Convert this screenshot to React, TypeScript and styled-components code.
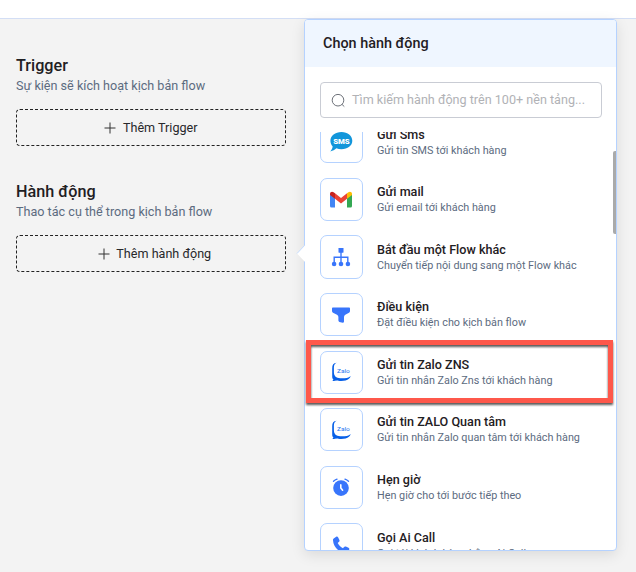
import React from "react";
import styled, { createGlobalStyle } from "styled-components";

const GlobalStyle = createGlobalStyle`
  * { box-sizing: border-box; }
  body { margin: 0; background: #f3f3f3; font-family: Roboto, "Open Sans", sans-serif; color: #1f2023; overflow: hidden; }
`;

const Page = styled.div`
  height: 572px;
  display: flex;
  flex-direction: column;
  overflow: hidden;
`;

const TopBar = styled.header`
  flex: none;
  height: 19px;
  background: #fff;
  border-bottom: 1px solid #d3def5;
`;

const Workspace = styled.main`
  display: flex;
  align-items: flex-start;
  gap: 18px;
  padding-left: 16px;
`;

const Steps = styled.div`
  width: 270px;
  padding-top: 35px;
  display: flex;
  flex-direction: column;
  gap: 34px;
`;

const Step = styled.section`
  height: 92px;
  display: flex;
  flex-direction: column;
`;

const StepTitle = styled.h2`
  margin: 0;
  height: 23px;
  font-size: 16.2px;
  line-height: 23px;
  font-weight: 500;
`;

const StepHint = styled.p`
  margin: 0;
  height: 18px;
  font-size: 12.6px;
  line-height: 18px;
  color: #5c6b80;
  white-space: nowrap;
`;

const AddButton = styled.button<{ $indent?: number }>`
  margin-top: 14px;
  padding: 0 0 0 ${({ $indent = 0 }) => $indent}px;
  flex: none;
  width: 270px;
  height: 37px;
  display: flex;
  align-items: center;
  justify-content: center;
  gap: 6.5px;
  border: 1px dashed #222;
  border-radius: 4px;
  background: transparent;
  color: #27282b;
  font: 400 12.6px/18px Roboto, sans-serif;
`;

const Panel = styled.aside`
  position: relative;
  width: 313px;
  height: 532px;
  display: flex;
  flex-direction: column;
  border: 1px solid #b5d2ff;
  border-radius: 4px;
  background: #fff;
  box-shadow: 0 4px 14px rgba(0, 0, 0, 0.1);
`;

const Pointer = styled.svg`
  position: absolute;
  left: -9px;
  top: 224px;
`;

const PanelHeader = styled.div`
  flex: none;
  height: 47px;
  padding: 0 18px;
  border-radius: 3px 3px 0 0;
  background: #eff6ff;
  font-size: 14.4px;
  line-height: 47px;
  font-weight: 500;
`;

const SearchBox = styled.div`
  flex: none;
  height: 36px;
  margin: 15px 14px 0 15px;
  padding-left: 10px;
  display: flex;
  align-items: center;
  gap: 6px;
  border: 1px solid #c9ccd4;
  border-radius: 4px;
  color: #b1b2b6;
  font-size: 12.6px;
  line-height: 18px;
  white-space: nowrap;
`;

const ListArea = styled.div`
  position: relative;
  flex: 1;
  min-height: 0;
  margin-top: 14px;
  padding-left: 15px;
  overflow: hidden;
`;

const List = styled.ul`
  list-style: none;
  margin: -11.8px 0 0;
  padding: 0;
  display: flex;
  flex-direction: column;
  gap: 14.4px;
`;

const Row = styled.li`
  display: flex;
  gap: 14px;
  height: 43.2px;
`;

const IconTile = styled.div`
  flex: none;
  width: 43px;
  height: 43.2px;
  padding-right: 1.5px;
  display: flex;
  align-items: center;
  justify-content: center;
  border: 1px solid #b5d2ff;
  border-radius: 7px;
  background: #fff;

  svg { flex: none; }
`;

const RowText = styled.div`
  padding-top: 5.35px;
  white-space: nowrap;
`;

const RowTitle = styled.div`
  font-size: 12.6px;
  line-height: 17px;
  font-weight: 500;
`;

const RowHint = styled.div`
  font-size: 10.8px;
  line-height: 15px;
  color: #5c6b80;
`;

const ScrollThumb = styled.div`
  position: absolute;
  right: 0;
  top: 19px;
  width: 3px;
  height: 83px;
  border-radius: 2px 0 0 2px;
  background: #aaa;
`;

const Highlight = styled.div`
  position: absolute;
  left: 1px;
  top: 320px;
  width: 307px;
  height: 63px;
  border: 5px solid #fe584b;
  filter: drop-shadow(0 2px 1px rgba(0, 0, 0, 0.65));
`;

const PlusIcon = () => (
  <svg width="12" height="12" viewBox="0 0 12 12" stroke="#333" strokeWidth="1">
    <path d="M6 .5V11.5M.5 6H11.5" />
  </svg>
);

const SearchIcon = () => (
  <svg width="15" height="15" viewBox="0 0 15 15" fill="none" stroke="#6e727a" strokeWidth="1">
    <circle cx="7" cy="7.2" r="5.8" />
    <path d="M11 11.4 13.3 13.6" />
  </svg>
);

const SmsIcon = () => (
  <svg width="24" height="22" viewBox="0 0 24 22">
    <path d="M12.5 1C18.7 1 23.3 4.8 23.3 9.7S18.7 18.2 12.5 18.2c-1.9 0-3.6-.3-5.1-.9C5.8 18.8 3.8 19.9 1.3 20.4 2.9 18.7 3.6 17 3.6 15.3 2.2 13.8 1.4 11.8 1.4 9.7 1.4 4.8 6.2 1 12.5 1Z" fill="#1296db" />
    <text x="12.4" y="12.6" textAnchor="middle" textLength="16.5" lengthAdjust="spacing" fontFamily="Roboto, sans-serif" fontWeight="900" fontSize="7.8" fill="#fff">SMS</text>
  </svg>
);

const GmailIcon = () => (
  <svg width="22" height="17" viewBox="0 0 22 17">
    <path d="M0 3.5 5 6V16.5H1.5Q0 16.5 0 15Z" fill="#4285f4" />
    <path d="M17 6 22 3.5V15Q22 16.5 20.5 16.5H17Z" fill="#34a853" />
    <path d="M5 2.3 11 7 17 2.3V7.8L11 12.4 5 7.8Z" fill="#ea4335" />
    <path d="M17 2.3 18.4 1.2C19.8.1 22 .8 22 2.8V4L17 7.8Z" fill="#fbbc04" />
    <path d="M0 2.8C0 .8 2.2.1 3.6 1.2L5 2.3V7.8L0 4Z" fill="#c5221f" />
  </svg>
);

const FlowIcon = () => (
  <svg width="20" height="20" viewBox="0 0 20 20" fill="#3875fb">
    <rect x="7.5" y="1" width="5" height="4.7" rx=".4" />
    <path d="M10 5V15M3.2 15V10.3H16.8V15" fill="none" stroke="#3875fb" strokeWidth="1.4" />
    <circle cx="3.1" cy="17" r="2.3" />
    <circle cx="10" cy="17" r="2.3" />
    <circle cx="16.9" cy="17" r="2.3" />
  </svg>
);

const FilterIcon = () => (
  <svg width="20" height="18" viewBox="0 0 20 18">
    <path d="M1.8 1.6H18.2Q19 1.6 19 2.4V5Q19 6 18 6.7L14.3 8.8Q13 9.6 13 11V15.6Q13 17 11.7 16.7L8.4 15.9Q7.4 15.6 7.4 14.6V11Q7.4 9.6 6 8.8L2 6.7Q1 6 1 5V2.4Q1 1.6 1.8 1.6Z" fill="#3875fb" />
  </svg>
);

const ZaloIcon = () => (
  <svg width="20" height="20" viewBox="0 0 20 20">
    <path d="M5.6.8C2.4 1 1.2 3 1.2 6.2V14.5C1.2 16.2 1.8 17.3 2.5 17.8L1.3 18.7C2.6 19.2 4 19 5.2 18.5 7.4 19 12 19.2 14.6 18.5 17.3 17.7 19.2 16.1 19.7 13.9 17.2 16 13.3 16.6 9.2 16.3 5.1 16 3.1 14.1 2.9 10.5V5.2C2.9 3.1 3.8 1.7 5.6.8Z" fill="#0860e8" />
    <text x="6" y="10.9" textLength="12.8" lengthAdjust="spacingAndGlyphs" fontFamily="Roboto, sans-serif" fontSize="6" fontWeight="400" fill="#2878ef">Zalo</text>
  </svg>
);

const ClockIcon = () => (
  <svg width="20" height="20" viewBox="0 0 20 20">
    <circle cx="10" cy="11.1" r="7.8" fill="#3875fb" />
    <path d="M2.5 4.2Q4 2.7 6 2.1M14 2.1Q16 2.7 17.5 4.2" fill="none" stroke="#3875fb" strokeWidth="1.4" strokeLinecap="round" />
    <path d="M9.8 7.9V11L11.6 13.2" fill="none" stroke="#fff" strokeWidth="1.6" strokeLinecap="round" />
  </svg>
);

const PhoneIcon = () => (
  <svg width="18" height="18" viewBox="0 0 18 18">
    <path d="M2 2.2 4.2.8C5 .4 5.8.7 6.2 1.5L7.4 4.1C7.7 4.8 7.5 5.6 6.8 6.1L5.7 7C6.7 9.2 8.7 11.2 11 12.3L12 11.1C12.5 10.4 13.2 10.3 13.9 10.6L16.5 11.8C17.3 12.1 17.5 12.9 17.2 13.7L16 16C15.6 16.9 15 17.3 14 17.2 6.8 16.5 1.5 11.2 1 4.2 .9 3.2 1.2 2.7 2 2.2Z" fill="#3875fb" />
  </svg>
);

const actions = [
  { title: "Gửi Sms", hint: "Gửi tin SMS tới khách hàng", Icon: SmsIcon },
  { title: "Gửi mail", hint: "Gửi email tới khách hàng", Icon: GmailIcon },
  { title: "Bắt đầu một Flow khác", hint: "Chuyển tiếp nội dung sang một Flow khác", Icon: FlowIcon },
  { title: "Điều kiện", hint: "Đặt điều kiện cho kịch bản flow", Icon: FilterIcon },
  { title: "Gửi tin Zalo ZNS", hint: "Gửi tin nhắn Zalo Zns tới khách hàng", Icon: ZaloIcon },
  { title: "Gửi tin ZALO Quan tâm", hint: "Gửi tin nhắn Zalo quan tâm tới khách hàng", Icon: ZaloIcon },
  { title: "Hẹn giờ", hint: "Hẹn giờ cho tới bước tiếp theo", Icon: ClockIcon },
  { title: "Gọi Ai Call", hint: "Gọi tới khách hàng bằng Ai Call", Icon: PhoneIcon },
];

export default function App() {
  return (
    <Page>
      <GlobalStyle />
      <TopBar />
      <Workspace>
        <Steps>
          <Step>
            <StepTitle>Trigger</StepTitle>
            <StepHint>Sự kiện sẽ kích hoạt kịch bản flow</StepHint>
            <AddButton><PlusIcon />Thêm Trigger</AddButton>
          </Step>
          <Step>
            <StepTitle>Hành động</StepTitle>
            <StepHint>Thao tác cụ thể trong kịch bản flow</StepHint>
            <AddButton $indent={7}><PlusIcon />Thêm hành động</AddButton>
          </Step>
        </Steps>
        <Panel>
          <Pointer width="10" height="20" viewBox="0 0 10 20">
            <path d="M10 0 1 9.5 10 19Z" fill="#fff" />
            <path d="M9 1 1 9.5" stroke="#c5dcff" />
          </Pointer>
          <PanelHeader>Chọn hành động</PanelHeader>
          <SearchBox><SearchIcon />Tìm kiếm hành động trên 100+ nền tảng...</SearchBox>
          <ListArea>
            <List>
              {actions.map(({ title, hint, Icon }) => (
                <Row key={title}>
                  <IconTile><Icon /></IconTile>
                  <RowText>
                    <RowTitle>{title}</RowTitle>
                    <RowHint>{hint}</RowHint>
                  </RowText>
                </Row>
              ))}
            </List>
            <ScrollThumb />
          </ListArea>
          <Highlight />
        </Panel>
      </Workspace>
    </Page>
  );
}
